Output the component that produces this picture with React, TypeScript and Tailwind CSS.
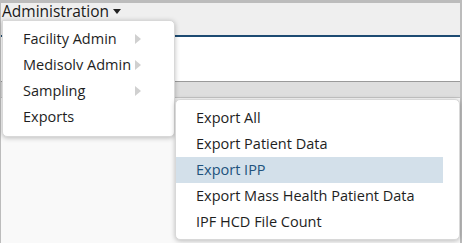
import React from "react";

const mainItems = [
  { label: "Facility Admin", sub: true },
  { label: "Medisolv Admin", sub: true },
  { label: "Sampling", sub: true },
  { label: "Exports", sub: false },
];

const exportItems = [
  "Export All",
  "Export Patient Data",
  "Export IPP",
  "Export Mass Health Patient Data",
  "IPF HCD File Count",
];

function Arrow() {
  return (
    <svg width="6" height="10" viewBox="0 0 6 10" className="shrink-0">
      <path d="M0 0 L6 5 L0 10 Z" fill="#d0d0d0" />
    </svg>
  );
}

export default function App() {
  return (
    <div
      className="relative w-[462px] h-[243px] overflow-hidden bg-[#bcbcbc] text-[#1e1e1e]"
      style={{ fontFamily: '"Open Sans", "Noto Sans", sans-serif' }}
    >
      <div className="flex flex-col h-full ml-[1px] mr-[2px] mt-[3px] bg-[#f9f9f9]">
        <div className="h-[32px] bg-[#efefef] flex items-start">
          <div className="flex items-center gap-[4px] pl-[1px] -mt-[3px] text-[15.5px] leading-[22px] text-[#1a1a1a]">
            Administration
            <svg width="8" height="5" viewBox="0 0 8 5">
              <path d="M0 0 L8 0 L4 5 Z" fill="#222" />
            </svg>
          </div>
        </div>
        <div className="h-[2px] bg-[#1d4b72]" />
        <div className="h-[44px] bg-white" />
        <div className="h-[17px] bg-[#dedede] border-t border-[#9a9a9a] border-b border-b-[#c4c4c4]" />
        <div className="flex-1 bg-[#f9f9f9]" />
      </div>

      <div className="absolute left-[2px] top-[20px] w-[173px] bg-white rounded-b-[5px] rounded-tr-[5px] shadow-[0_1px_5px_rgba(0,0,0,0.25)] pt-[5px] pb-[6px] border border-[#d8d8d8]">
        {mainItems.map((it) => (
          <div key={it.label} className="h-[26px] flex items-center pl-[20px] text-[14.5px]">
            <span className="w-[112px] whitespace-nowrap">{it.label}</span>
            {it.sub && <Arrow />}
          </div>
        ))}
      </div>

      <div className="absolute left-[175px] top-[99px] w-[285px] bg-white rounded-[5px] shadow-[0_1px_5px_rgba(0,0,0,0.25)] pt-[5px] pb-[4px] pr-[16px] border border-[#d8d8d8]">
        {exportItems.map((label) => (
          <div
            key={label}
            className={
              "h-[26px] flex items-center pl-[20px] text-[14.5px] whitespace-nowrap " +
              (label === "Export IPP" ? "bg-[#d3e0ea] text-[#21527c]" : "")
            }
          >
            {label}
          </div>
        ))}
      </div>
    </div>
  );
}
